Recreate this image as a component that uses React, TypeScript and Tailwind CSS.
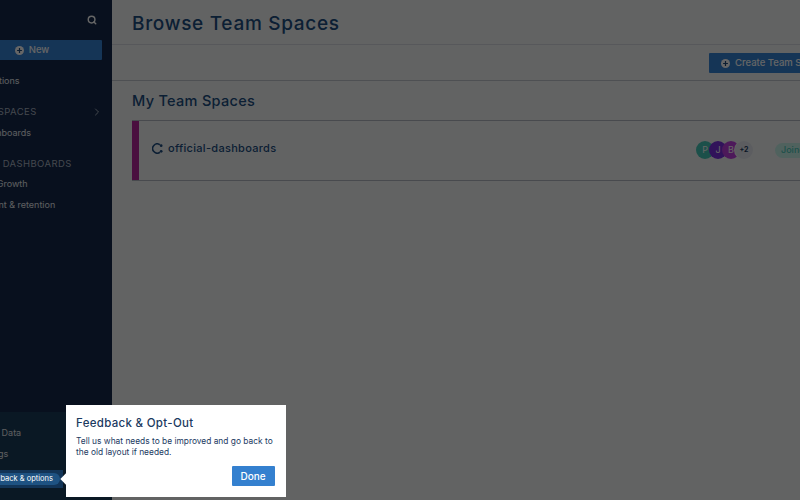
import { ChevronRight, Search } from "lucide-react";

const font = { fontFamily: '"Inter", "Liberation Sans", sans-serif' };

function PlusCircle({ className }: { className: string }) {
  return (
    <svg viewBox="0 0 12 12" className={className}>
      <circle cx="6" cy="6" r="6" fill="currentColor" />
      <path d="M6 2.8v6.4M2.8 6h6.4" stroke="#1c4a7c" strokeWidth="1.6" />
    </svg>
  );
}

function TeamIcon() {
  return (
    <svg viewBox="0 0 12 12" className="h-[11px] w-[11px] text-[#204f82]">
      <path d="M8.6 1.9A5 5 0 1 0 8.6 10.1" fill="none" stroke="currentColor" strokeWidth="1.7" />
      <circle cx="10" cy="2.9" r="1.5" fill="currentColor" />
      <circle cx="10" cy="9.1" r="1.5" fill="currentColor" />
    </svg>
  );
}

function SideLink({ label }: { label: string }) {
  return <div className="h-[21px] text-[9px] leading-[21px] whitespace-nowrap text-[#e6e9ee]">{label}</div>;
}

function SideHead({ label }: { label: string }) {
  return <div className="text-[9.5px] leading-[14px] tracking-[0.4px] whitespace-nowrap text-[#aab4c2]">{label}</div>;
}

function Avatar({ letter, color }: { letter: string; color: string }) {
  return (
    <div className={`-ml-[5px] flex h-[18px] w-[18px] items-center justify-center rounded-full text-[9px] text-white ${color}`}>
      {letter}
    </div>
  );
}

export default function App() {
  return (
    <div className="relative flex h-[500px] w-[800px] overflow-hidden bg-[#f6f7f8] text-[#204f82]" style={font}>
      <aside className="h-full w-[112px] shrink-0 overflow-hidden bg-[#14294c]">
        <div className="-ml-[56px] flex h-full w-[168px] flex-col px-[10px]">
          <div className="flex h-[40px] items-center justify-end pr-[5px] pb-[1px]">
            <Search className="h-[10px] w-[10px] text-white" strokeWidth={3.5} />
          </div>
          <div className="flex h-[20px] items-center justify-center gap-[5px] rounded-[1px] bg-[#3585d8] pt-[1px] pl-[8px] text-[9.5px] font-medium text-white">
            <PlusCircle className="h-[9px] w-[9px] text-white" />
            New
          </div>
          <div className="mt-[10px]">
            <SideLink label="Customizations" />
          </div>
          <div className="mt-[14px] flex items-center justify-between">
            <SideHead label="SHARED SPACES" />
            <ChevronRight className="-mr-[1px] h-[12px] w-[12px] text-[#aab4c2]" />
          </div>
          <div className="mt-[3px]">
            <SideLink label="Team Dashboards" />
          </div>
          <div className="mt-[14px]">
            <SideHead label="STARRED DASHBOARDS" />
          </div>
          <div className="mt-[2px]">
            <SideLink label="Retention Growth" />
            <SideLink label="Employment & retention" />
          </div>
          <div className="-mx-[10px] mt-auto h-[88px] bg-[#1a3c5a] px-[10px] pt-[10px]">
            <SideLink label="Customize Data" />
            <SideLink label="App Settings" />
          </div>
        </div>
      </aside>

      <main className="w-[738px] shrink-0">
        <header className="flex h-[45px] items-center border-b border-[#d9dde3] pt-[5px] pl-[20px]">
          <h1 className="text-[19px] font-medium tracking-[0.7px]">Browse Team Spaces</h1>
        </header>
        <div className="flex h-[36px] items-center justify-end border-b border-[#c4c9d0] pt-[1px] pr-[20px]">
          <div className="flex h-[20px] w-[121px] items-center gap-[5px] rounded-[1px] bg-[#3585d8] pt-[1px] pl-[12px] text-[9.5px] font-medium text-white">
            <PlusCircle className="h-[9px] w-[9px] text-white" />
            Create Team Space
          </div>
        </div>
        <div className="px-[20px]">
          <h2 className="mt-[10px] text-[14.5px] leading-[20px] font-medium tracking-[0.3px]">My Team Spaces</h2>
          <div className="mt-[9px] flex h-[61px] items-center border-y border-[#b5bac2]">
            <div className="h-full w-[7px] bg-[#b8269e]" />
            <div className="flex flex-1 items-center justify-between pr-[5px] pl-[13px]">
              <div className="-mt-[4px] flex items-center gap-[5px] text-[11px] font-medium tracking-[0.3px]">
                <TeamIcon />
                official-dashboards
              </div>
              <div className="-mt-[1px] flex items-center gap-[22px]">
                <div className="flex items-center">
                  <Avatar letter="P" color="bg-[#48c8b8]" />
                  <Avatar letter="J" color="bg-[#7a30e0]" />
                  <Avatar letter="B" color="bg-[#c040e0]" />
                  <div className="-ml-[5px] flex h-[18px] w-[18px] items-center justify-center rounded-full bg-[#e5e9f0] text-[7px] font-bold text-[#1b3a5f] ring-1 ring-[#f6f7f8]">
                    +2
                  </div>
                </div>
                <div className="flex h-[15px] w-[50px] items-center rounded-full bg-[#c8f5ec] pl-[6px] text-[9px] font-medium text-[#48c8b8]">
                  Joined
                </div>
              </div>
            </div>
          </div>
        </div>
      </main>

      <div className="absolute inset-0 bg-black/60" />

      <div className="absolute bottom-[12px] left-0 flex h-[18px] w-[63px] items-center justify-end bg-[#123457] pr-[3px]">
        <div className="flex h-[12px] w-[60px] justify-end overflow-hidden rounded-r-full bg-[#1e5282] pr-[7px] text-[7.5px] leading-[12px] whitespace-nowrap text-white">
          <span>Feedback &amp; options</span>
        </div>
      </div>

      <div className="absolute top-[405px] left-[66px] h-[92px] w-[219.5px] bg-white pt-[10px] pr-[8px] pl-[10px] text-[#1b3a5f]">
        <div className="absolute top-[70px] -left-[4px] h-[8px] w-[8px] rotate-45 bg-white" />
        <div className="text-[11.5px] leading-[16px] font-medium tracking-[0.3px]">Feedback &amp; Opt-Out</div>
        <p className="mt-[5px] text-[8.4px] leading-[11px]">
          Tell us what needs to be improved and go back to the old layout if needed.
        </p>
        <div className="absolute right-[11px] bottom-[11px] flex h-[20px] w-[43px] items-center justify-center rounded-[1px] bg-[#3480cf] text-[10px] font-medium text-white">
          Done
        </div>
      </div>
    </div>
  );
}
